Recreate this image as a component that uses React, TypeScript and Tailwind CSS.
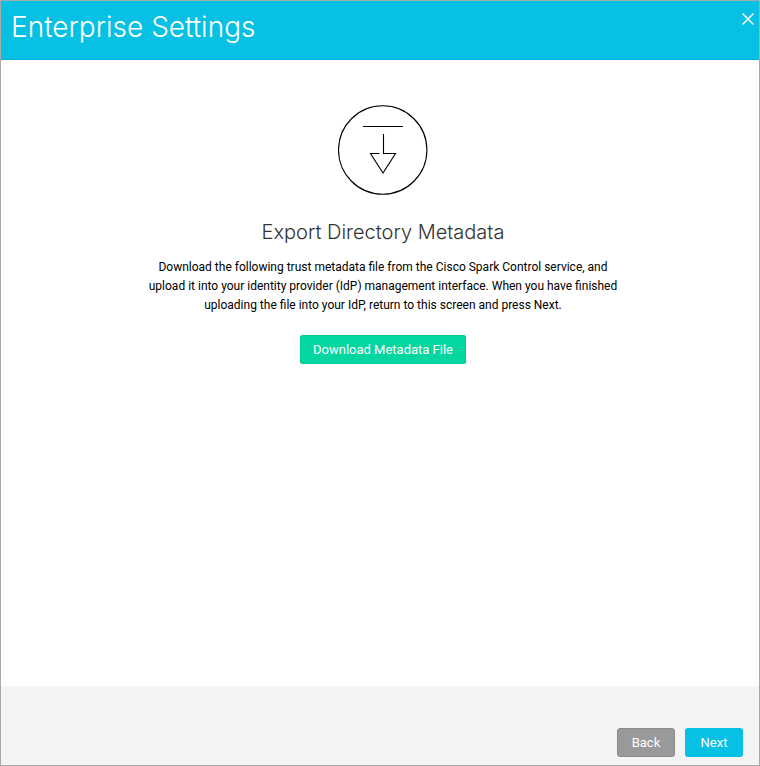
function DownloadIcon() {
  return (
    <svg
      className="h-[90px] w-[90px]"
      viewBox="0 0 90 90"
      fill="none"
      stroke="#000000"
      strokeWidth="1.1"
      aria-hidden="true"
    >
      <circle cx="44.7" cy="45" r="44.2" />
      <path d="M25 21.5H65M45.5 29V48.5H57.5L45 68L32.5 48.5H41.5" />
    </svg>
  );
}

function CloseIcon() {
  return (
    <svg className="h-3 w-3" viewBox="0 0 12 12" stroke="white" strokeWidth="1.5" aria-hidden="true">
      <path d="M0.5 0.5L11.5 11.5M11.5 0.5L0.5 11.5" />
    </svg>
  );
}

export default function App() {
  return (
    <div className="flex min-h-screen flex-col border border-[#a9a9a9] bg-white font-['Inter','Liberation_Sans',sans-serif] text-black">
      <header className="flex h-[59px] items-start justify-between border-b border-[#00a9e0] bg-[#07c1e4] pl-[10px] pr-[5px] text-white">
        <h1 className="pt-2 text-[28px] font-light leading-9">Enterprise Settings</h1>
        <button type="button" aria-label="Close" className="mt-3">
          <CloseIcon />
        </button>
      </header>

      <main className="flex flex-1 flex-col items-center pl-1.5 pt-[45px]">
        <DownloadIcon />
        <h2 className="mt-[23px] text-[20px] font-light leading-7 text-[#333333]">Export Directory Metadata</h2>
        <p className="mt-3 max-w-[480px] text-center font-['Roboto','Liberation_Sans',sans-serif] text-[12px] leading-[19px]">
          Download the following trust metadata file from the Cisco Spark Control service, and
          <br />
          upload it into your identity provider (IdP) management interface. When you have finished
          <br />
          uploading the file into your IdP, return to this screen and press Next.
        </p>
        <button
          type="button"
          className="mt-5 h-[29px] rounded-xs border border-[#04cc93] bg-[#04d6a0] px-3 font-['Roboto','Liberation_Sans',sans-serif] text-[13px] leading-5 text-white"
        >
          Download Metadata File
        </button>
      </main>

      <footer className="flex h-[79px] items-end justify-end gap-[10px] bg-[#f4f4f4] pb-2 pr-4 font-['Roboto','Liberation_Sans',sans-serif]">
        <button
          type="button"
          className="h-[29px] w-[58px] rounded-[3px] border border-[#8c8c8c] bg-[#999999] text-[13px] leading-5 text-white"
        >
          Back
        </button>
        <button
          type="button"
          className="h-[29px] w-[58px] rounded-[3px] bg-[#07c1e4] text-[13px] leading-5 text-white"
        >
          Next
        </button>
      </footer>
    </div>
  );
}
